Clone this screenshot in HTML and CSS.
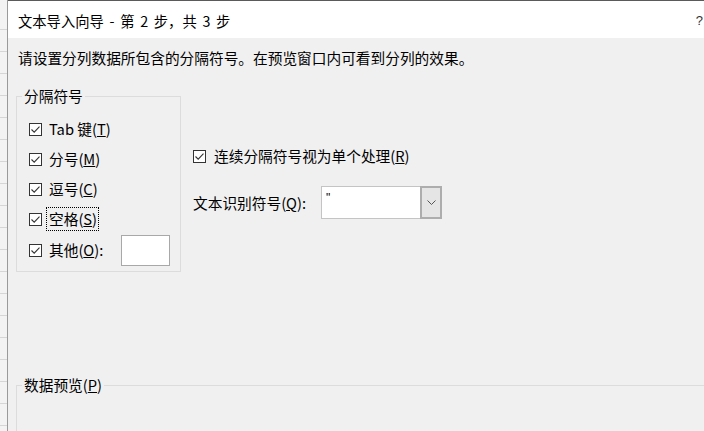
FILE: index.html
```html
<!DOCTYPE html>
<html lang="zh-CN">
<head>
<meta charset="utf-8">
<title>文本导入向导</title>
<link rel="stylesheet" href="styles.css">
</head>
<body>
<div class="screen">
  <div class="sheet"></div>
  <div class="dialog">
    <div class="titlebar">
      <span class="title">文本导入向导 - 第 2 步，共 3 步</span>
      <span class="help">?</span>
    </div>
    <div class="content">
      <div class="intro">请设置分列数据所包含的分隔符号。在预览窗口内可看到分列的效果。</div>
      <div class="options">
        <fieldset class="group delims">
          <legend class="legend legend-delims">分隔符号</legend>
          <div class="row">
            <span class="cb"><svg viewBox="0 0 13 13" width="13" height="13"><path d="M2.5 6.5 L5.2 9.2 L10.5 3.6" fill="none" stroke="#333" stroke-width="1.1"/></svg></span>
            <span class="lbl">Tab 键(<u>T</u>)</span>
          </div>
          <div class="row">
            <span class="cb"><svg viewBox="0 0 13 13" width="13" height="13"><path d="M2.5 6.5 L5.2 9.2 L10.5 3.6" fill="none" stroke="#333" stroke-width="1.1"/></svg></span>
            <span class="lbl">分号(<u>M</u>)</span>
          </div>
          <div class="row">
            <span class="cb"><svg viewBox="0 0 13 13" width="13" height="13"><path d="M2.5 6.5 L5.2 9.2 L10.5 3.6" fill="none" stroke="#333" stroke-width="1.1"/></svg></span>
            <span class="lbl">逗号(<u>C</u>)</span>
          </div>
          <div class="row">
            <span class="cb"><svg viewBox="0 0 13 13" width="13" height="13"><path d="M2.5 6.5 L5.2 9.2 L10.5 3.6" fill="none" stroke="#333" stroke-width="1.1"/></svg></span>
            <span class="lbl focus">空格(<u>S</u>)</span>
          </div>
          <div class="row row-other">
            <span class="cb"><svg viewBox="0 0 13 13" width="13" height="13"><path d="M2.5 6.5 L5.2 9.2 L10.5 3.6" fill="none" stroke="#333" stroke-width="1.1"/></svg></span>
            <span class="lbl">其他(<u>O</u>):</span>
            <span class="textbox"></span>
          </div>
        </fieldset>
        <div class="side">
          <div class="row side-check">
            <span class="cb"><svg viewBox="0 0 13 13" width="13" height="13"><path d="M2.5 6.5 L5.2 9.2 L10.5 3.6" fill="none" stroke="#333" stroke-width="1.1"/></svg></span>
            <span class="lbl">连续分隔符号视为单个处理(<u>R</u>)</span>
          </div>
          <div class="qualifier">
            <span class="qlabel">文本识别符号(<u>Q</u>):</span>
            <div class="combo">
              <span class="combo-value">"</span>
              <span class="combo-btn"><svg viewBox="0 0 9 5" width="9" height="5"><path d="M0.5 0.5 L4.5 4.5 L8.5 0.5" fill="none" stroke="#555" stroke-width="1"/></svg></span>
            </div>
          </div>
        </div>
      </div>
      <fieldset class="group preview">
        <legend class="legend">数据预览(<u>P</u>)</legend>
      </fieldset>
    </div>
  </div>
</div>
</body>
</html>
```

FILE: styles.css
```css
html, body {
  margin: 0;
  padding: 0;
  width: 704px;
  height: 431px;
  overflow: hidden;
  background: #f0f0f0;
}

.screen {
  display: flex;
  width: 720px;
  height: 431px;
  overflow: hidden;
  font-family: "Noto Sans CJK SC", "Noto Sans", sans-serif;
  color: #000;
}

.sheet {
  width: 7px;
  flex: none;
  background:
    repeating-linear-gradient(to bottom, transparent 0, transparent 21px, #d6d6d6 21px, #d6d6d6 22px) 0 8px / 7px 100% no-repeat,
    #f3f3f3;
  border-right: 1px solid #9a9a9a;
  box-sizing: content-box;
}

.dialog {
  flex: 1;
  display: flex;
  flex-direction: column;
  border-top: 1px solid #5a5a5a;
  background: #f0f0f0;
  min-width: 0;
}

.titlebar {
  height: 37px;
  background: #fff;
  display: flex;
  align-items: center;
  justify-content: space-between;
  padding: 0 17px 0 10px;
  flex: none;
}

.title {
  font-size: 14.3px;
  line-height: 20px;
  padding-top: 2px;
  word-spacing: 2.5px;
}

.help {
  font-family: "Liberation Sans", sans-serif;
  font-size: 13px;
  color: #333;
  padding-top: 2px;
}

.content {
  padding: 10px 0 0 8px;
  display: flex;
  flex-direction: column;
  flex: 1;
  font-size: 14.7px;
}

.intro {
  line-height: 20px;
  padding-left: 2px;
}

.options {
  display: flex;
  margin-top: 18px;
}

.group {
  margin: 0;
  border: 1px solid #dcdcdc;
  padding: 0;
  min-width: 0;
}

.legend {
  margin-left: 5px;
  padding: 0 2px;
  line-height: 20px;
}

.legend-delims {
  margin-left: -7px;
}

.delims {
  width: 151px;
  padding: 8px 0 5px 12px;
  box-sizing: content-box;
  flex: none;
}

.row {
  display: flex;
  align-items: center;
  height: 30px;
}

.row-other {
  height: 32px;
}

.cb {
  width: 13px;
  height: 13px;
  border: 1px solid #333;
  box-sizing: border-box;
  background: #fff;
  flex: none;
  display: flex;
}

.cb svg {
  margin: -1px;
}

.lbl {
  margin-left: 7px;
  line-height: 20px;
  white-space: nowrap;
}

.focus {
  outline: 1px dotted #000;
  outline-offset: 1px;
  margin-left: 6px;
  padding: 0 0 0 1px;
}

.textbox {
  width: 47px;
  height: 29px;
  border: 1px solid #a8a8a8;
  background: #fff;
  margin-left: 18px;
  flex: none;
}

.side {
  margin-left: 12px;
  padding-top: 60px;
  display: flex;
  flex-direction: column;
}

.side-check {
  height: 20px;
}

.side-check .lbl {
  margin-left: 8px;
}

.qualifier {
  display: flex;
  align-items: center;
  margin-top: 20px;
}

.qlabel {
  line-height: 20px;
  width: 128px;
  white-space: nowrap;
}

.combo {
  display: flex;
  width: 121px;
  height: 33px;
  border: 1px solid #c4c4c4;
  box-sizing: border-box;
  background: #fff;
}

.combo-value {
  flex: 1;
  font-family: "Liberation Sans", sans-serif;
  font-size: 12px;
  color: #000;
  padding: 4px 0 0 4px;
  line-height: 14px;
}

.combo-btn {
  width: 22px;
  border: 2px solid #adadad;
  background: #e5e5e5;
  box-sizing: border-box;
  margin: -1px -1px -1px 0;
  display: flex;
  align-items: center;
  justify-content: center;
}

.preview {
  margin-top: 103px;
  margin-right: 0;
  height: 200px;
  border-right: none;
  border-bottom: none;
}
```
